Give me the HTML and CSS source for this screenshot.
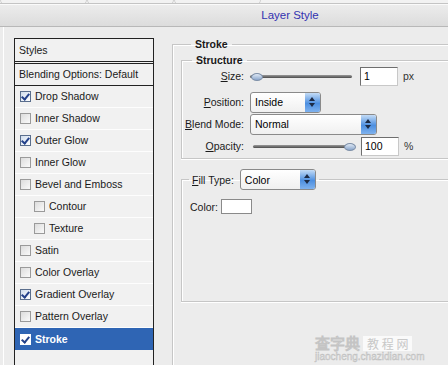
FILE: index.html
```html
<!DOCTYPE html>
<html lang="en">
<head>
    <meta charset="UTF-8">
    <meta name="viewport" content="width=device-width, initial-scale=1.0">
    <title>Layer Style</title>
    <link rel="stylesheet" href="styles.css">
</head>
<body>
    <div class="tabs">
        <span class="tab"></span>
        <span class="tab"></span>
        <span class="tab"></span>
    </div>
    <div class="titlebar">Layer Style</div>

    <div class="main">
        <div class="sidebar">
            <div class="list">
                <div class="list-head">Styles</div>
                <div class="list-blend">Blending Options: Default</div>
                <div class="item"><span class="check on"></span>Drop Shadow</div>
                <div class="item"><span class="check"></span>Inner Shadow</div>
                <div class="item"><span class="check on"></span>Outer Glow</div>
                <div class="item"><span class="check"></span>Inner Glow</div>
                <div class="item"><span class="check"></span>Bevel and Emboss</div>
                <div class="item sub"><span class="check"></span>Contour</div>
                <div class="item sub"><span class="check"></span>Texture</div>
                <div class="item"><span class="check"></span>Satin</div>
                <div class="item"><span class="check"></span>Color Overlay</div>
                <div class="item"><span class="check on"></span>Gradient Overlay</div>
                <div class="item"><span class="check"></span>Pattern Overlay</div>
                <div class="item selected"><span class="check on"></span>Stroke</div>
            </div>
        </div>

        <div class="content">
            <fieldset class="group stroke">
                <legend class="bold">Stroke</legend>

                <fieldset class="group structure">
                    <legend class="bold">Structure</legend>
                    <div class="row first">
                        <label><u>S</u>ize:</label>
                        <div class="slider"><span class="thumb"></span></div>
                        <input class="num" type="text" value="1">
                        <span class="unit">px</span>
                    </div>
                    <div class="row gap">
                        <label><u>P</u>osition:</label>
                        <div class="select short"><span>Inside</span><span class="arrow"></span></div>
                    </div>
                    <div class="row">
                        <label><u>B</u>lend Mode:</label>
                        <div class="select long"><span>Normal</span><span class="arrow"></span></div>
                    </div>
                    <div class="row">
                        <label><u>O</u>pacity:</label>
                        <div class="slider full"><span class="thumb"></span></div>
                        <input class="num" type="text" value="100">
                        <span class="unit">%</span>
                    </div>
                </fieldset>

                <fieldset class="group fill">
                    <legend class="fill-legend">
                        <span><u>F</u>ill Type:</span>
                        <div class="select fill-select"><span>Color</span><span class="arrow"></span></div>
                    </legend>
                    <div class="color-row">
                        <span>Color:</span>
                        <span class="swatch"></span>
                    </div>
                </fieldset>
            </fieldset>
        </div>
    </div>

    <div class="watermark">
        <div class="wm-top"><span class="wm-big">查字典</span><span class="wm-box">教 程 网</span></div>
        <div class="wm-url">jiaocheng.chazidian.com</div>
    </div>
</body>
</html>
```

FILE: styles.css
```css
body {
    font-family: "Liberation Sans", Arial, sans-serif;
    font-size: 10.5px;
    color: #1a1a1a;
    background-color: #ececec;
    margin: 0;
    width: 448px;
    height: 365px;
    overflow: hidden;
    position: relative;
    white-space: nowrap;
}

.tabs {
    height: 3px;
    display: flex;
    border-bottom: 1px solid #c4c4c4;
    background-color: #f2f2f2;
    overflow: hidden;
}

.tab {
    width: 85px;
    height: 8px;
    margin-top: -5px;
    border: 1px solid #d0d0d0;
    border-radius: 40px;
}

.titlebar {
    height: 21px;
    line-height: 21px;
    text-align: center;
    padding-left: 132px;
    color: #3333b0;
    font-size: 11.5px;
    background: linear-gradient(#ececec, #dcdcdc);
    border-bottom: 1px solid #b8b8b8;
    border-top: 1px solid #fafafa;
}

.main {
    display: flex;
    padding-top: 11px;
    border-left: 1px solid #fff;
    margin-left: 3px;
}

.sidebar {
    flex: none;
    margin-left: 10px;
    width: 140px;
}

.list {
    border: 1px solid #222;
    border-bottom: none;
    background-color: #f1f1f1;
    height: 340px;
}

.list-head {
    height: 22px;
    line-height: 22px;
    padding-left: 4px;
    border-bottom: 3px double #222;
}

.list-blend {
    height: 21px;
    line-height: 21px;
    padding-left: 4px;
    border-bottom: 1px solid #222;
}

.item {
    height: 21px;
    line-height: 21px;
    padding-left: 5px;
    display: flex;
    align-items: center;
    gap: 4px;
    border-bottom: 1px solid #fdfdfd;
}

.item.sub {
    padding-left: 19px;
}

.item.selected {
    background-color: #2f65b4;
    color: #fff;
    font-weight: bold;
    border-bottom: none;
    height: 22px;
}

.check {
    flex: none;
    width: 9px;
    height: 9px;
    border: 1px solid #9a9a9a;
    background: linear-gradient(135deg, #dcdcdc, #fafafa);
    position: relative;
}

.check.on {
    border-color: #5a6e8c;
    background: linear-gradient(135deg, #cfdcec, #ffffff);
}

.check.on::after {
    content: "";
    position: absolute;
    left: 2px;
    top: 0px;
    width: 3px;
    height: 6px;
    border: solid #23418a;
    border-width: 0 2px 2px 0;
    transform: rotate(40deg);
}

.selected .check.on {
    border-color: #fff;
    background: #fff;
}

.content {
    flex: 1;
    min-width: 0;
    padding-left: 18px;
}

.group {
    margin: 0;
    border: 1px solid #c6c6c6;
    border-right: none;
    box-shadow: inset 1px 1px 0 #fff, 0 1px 0 #fff;
    min-width: 0;
}

.bold {
    font-weight: bold;
    padding: 0 4px;
    margin-left: 10px;
}

.stroke {
    margin-top: 0;
    padding: 0 0 0 8px;
    height: 340px;
}

.structure {
    margin-top: 4px;
    padding: 0;
    height: 103px;
}

.row {
    height: 22px;
    display: flex;
    align-items: center;
}

.row.first {
    margin-top: -1px;
}

.row.gap {
    margin-top: 4px;
}

.row label {
    width: 62px;
    text-align: right;
    padding-right: 5px;
}

.slider {
    width: 102px;
    height: 3px;
    margin-left: 1px;
    border-radius: 2px;
    background: linear-gradient(#9a9a9a, #4c4c4c);
    position: relative;
    margin-right: 8px;
}

.slider.full {
    margin-left: 4px;
    margin-right: 6px;
}

.thumb {
    position: absolute;
    left: 1px;
    top: -2px;
    width: 10px;
    height: 6px;
    border-radius: 50%;
    background: linear-gradient(#dfe9f5, #8aa6cc);
    border: 1px solid #7d8fa8;
}

.slider.full .thumb {
    left: auto;
    right: -1px;
}

.num {
    width: 30px;
    height: 15px;
    padding: 1px 3px;
    border: 1px solid #6e6e6e;
    border-right-color: #c8c8c8;
    border-bottom-color: #c8c8c8;
    font-family: inherit;
    font-size: 10.5px;
    color: #000;
    background: #fff;
}

.unit {
    margin-left: 5px;
    color: #333;
}

.select {
    display: flex;
    align-items: center;
    justify-content: space-between;
    border: 1px solid #8a8a8a;
    border-radius: 3px;
    background: linear-gradient(#ffffff, #f0f0f0);
    padding-left: 4px;
    box-sizing: border-box;
    height: 21px;
    color: #000;
}

.select.short {
    width: 71px;
    margin-left: 1px;
}

.select.long {
    width: 127px;
    margin-left: 1px;
}

.arrow {
    width: 15px;
    height: 19px;
    border-radius: 0 2px 2px 0;
    background: linear-gradient(#c4dcf6, #4d8fe0 55%, #7fb2ee);
    position: relative;
}

.arrow::before,
.arrow::after {
    content: "";
    position: absolute;
    left: 4px;
    border-left: 3px solid transparent;
    border-right: 3px solid transparent;
}

.arrow::before {
    top: 4px;
    border-bottom: 4px solid #1c2a44;
}

.arrow::after {
    top: 10px;
    border-top: 4px solid #1c2a44;
}

.fill {
    margin-top: 10px;
    padding: 0 0 0 8px;
    height: 131px;
}

.fill-legend {
    display: flex;
    align-items: center;
    margin-left: -1px;
    padding: 0 3px;
}

.fill-select {
    width: 76px;
    margin-left: 6px;
}

.color-row {
    display: flex;
    align-items: center;
    margin-top: 9px;
    gap: 3px;
}

.swatch {
    width: 29px;
    height: 13px;
    background: #fff;
    border: 1px solid #8a8a8a;
}

.watermark {
    position: absolute;
    left: 315px;
    top: 335px;
    color: #cfcfcf;
    font-family: "Noto Sans CJK SC", sans-serif;
}

.wm-top {
    display: flex;
    align-items: center;
    gap: 3px;
}

.wm-big {
    font-size: 15px;
    color: #ececec;
    -webkit-text-stroke: 1px #c4c4c4;
    line-height: 16px;
}

.wm-box {
    background: #fafafa;
    color: #c8c8c8;
    font-size: 12px;
    padding: 0 4px;
    line-height: 15px;
}

.wm-url {
    font-family: "Liberation Sans", sans-serif;
    font-size: 10px;
    color: #dadada;
    -webkit-text-stroke: 0.4px #bdbdbd;
    line-height: 12px;
}
```
